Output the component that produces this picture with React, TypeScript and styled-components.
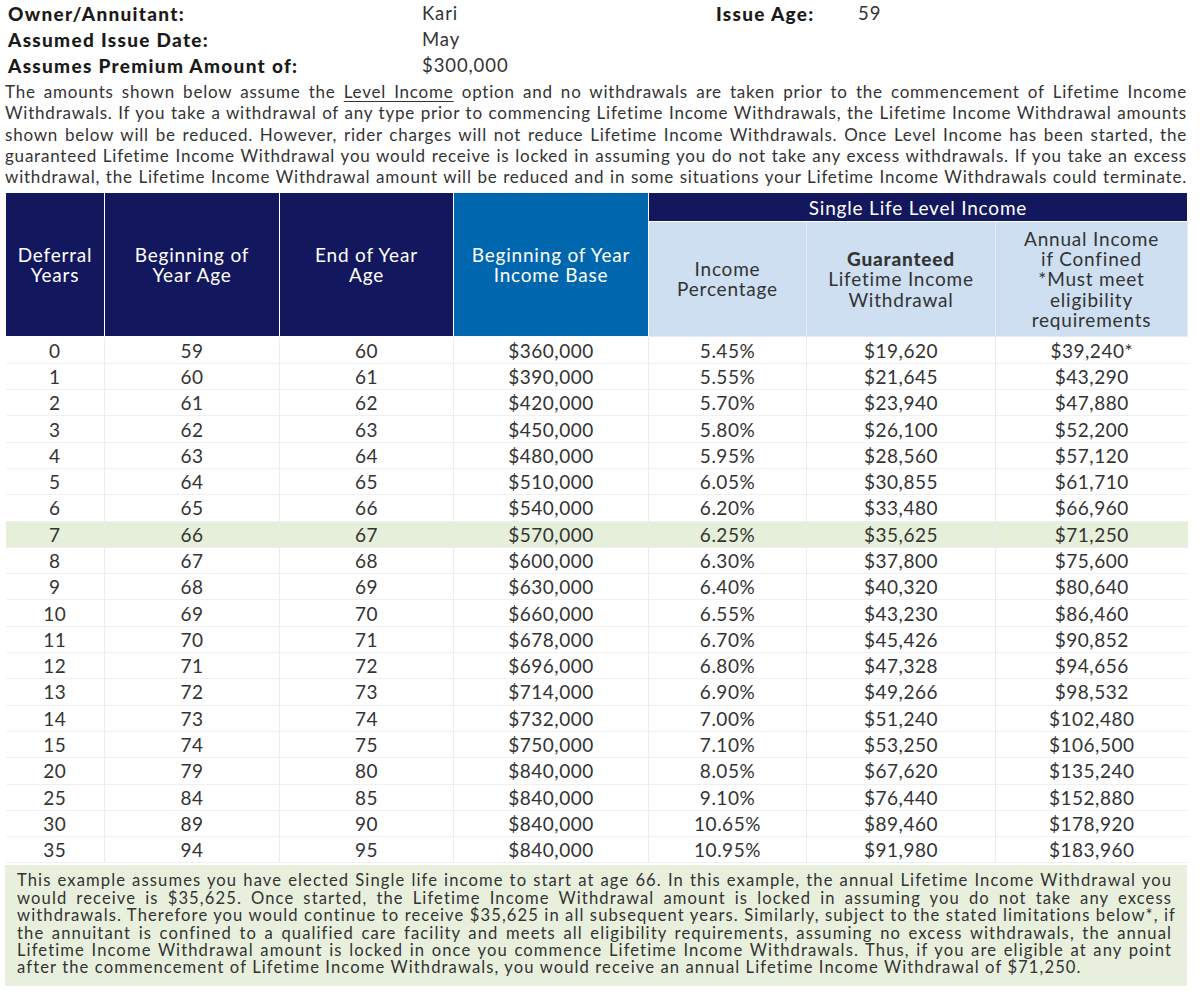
import React from "react";
import styled, { createGlobalStyle } from "styled-components";

const GlobalStyle = createGlobalStyle`
  html, body { margin: 0; padding: 0; background: #ffffff; }
  body { font-family: Lato, "Open Sans", "Liberation Sans", sans-serif; color: #333333; }
`;

const Page = styled.div`
  width: 1200px;
  padding: 0 13px 0 5px;
  box-sizing: border-box;
`;

const InfoGrid = styled.div`
  display: grid;
  grid-template-columns: 414px 294px 142px auto;
  grid-auto-rows: 26px;
  padding-left: 3px;
  align-items: center;
`;

const Label = styled.div`
  font-weight: 900;
  font-size: 19px;
  letter-spacing: 1.3px;
  color: #1a1a1a;
`;

const Value = styled.div`
  font-size: 18.5px;
  letter-spacing: 0.9px;
  color: #333333;
`;

const Intro = styled.div`
  margin-top: 3px;
  font-size: 17px;
  letter-spacing: 0.78px;
  line-height: 21.3px;
  color: #333333;
`;

const JustLine = styled.span<{ $last?: boolean }>`
  display: block;
  text-align: justify;
  text-align-last: ${(p) => (p.$last ? "left" : "justify")};
  white-space: nowrap;
`;

const Underlined = styled.span`
  text-decoration: underline;
  text-underline-offset: 3px;
`;

const Table = styled.table`
  margin-top: 5px;
  width: 1182px;
  border-collapse: collapse;
  table-layout: fixed;
`;

const HeadCell = styled.th<{ $tone: "navy" | "blue" | "light" }>`
  background: ${(p) =>
    p.$tone === "navy" ? "#13185e" : p.$tone === "blue" ? "#0066ad" : "#cddff0"};
  color: ${(p) => (p.$tone === "light" ? "#333333" : "#ffffff")};
  font-weight: 400;
  font-size: 19px;
  letter-spacing: 0.8px;
  line-height: 20.2px;
  text-align: center;
  vertical-align: middle;
  border: 1px solid ${(p) => (p.$tone === "light" ? "#e4edf7" : "#ffffff")};
  padding: 0 4px;
`;

const GroupCell = styled.th`
  background: #13185e;
  color: #ffffff;
  font-weight: 400;
  font-size: 19px;
  letter-spacing: 0.8px;
  height: 28px;
  padding: 0;
  text-align: center;
  border: 1px solid #ffffff;
`;

const Strong = styled.span`
  font-weight: 900;
`;

const Row = styled.tr<{ $hi?: boolean }>`
  background: ${(p) => (p.$hi ? "#e6efda" : "transparent")};
`;

const Cell = styled.td`
  height: 25.3px;
  padding: 0;
  font-size: 19px;
  letter-spacing: 0.5px;
  line-height: 25px;
  text-align: center;
  color: #333333;
  border-left: 1px solid #ececec;
  border-bottom: 1px solid #f0f0f0;
  &:first-child { border-left: none; }
`;

const Footer = styled.div`
  width: 1182px;
  box-sizing: border-box;
  background: #e8f0dd;
  margin-top: 2px;
  padding: 7px 15px 9px 12px;
  font-size: 16.6px;
  letter-spacing: 1.1px;
  line-height: 17.4px;
  color: #333333;
`;

const rows: string[][] = [
  ["0", "59", "60", "$360,000", "5.45%", "$19,620", "$39,240*"],
  ["1", "60", "61", "$390,000", "5.55%", "$21,645", "$43,290"],
  ["2", "61", "62", "$420,000", "5.70%", "$23,940", "$47,880"],
  ["3", "62", "63", "$450,000", "5.80%", "$26,100", "$52,200"],
  ["4", "63", "64", "$480,000", "5.95%", "$28,560", "$57,120"],
  ["5", "64", "65", "$510,000", "6.05%", "$30,855", "$61,710"],
  ["6", "65", "66", "$540,000", "6.20%", "$33,480", "$66,960"],
  ["7", "66", "67", "$570,000", "6.25%", "$35,625", "$71,250"],
  ["8", "67", "68", "$600,000", "6.30%", "$37,800", "$75,600"],
  ["9", "68", "69", "$630,000", "6.40%", "$40,320", "$80,640"],
  ["10", "69", "70", "$660,000", "6.55%", "$43,230", "$86,460"],
  ["11", "70", "71", "$678,000", "6.70%", "$45,426", "$90,852"],
  ["12", "71", "72", "$696,000", "6.80%", "$47,328", "$94,656"],
  ["13", "72", "73", "$714,000", "6.90%", "$49,266", "$98,532"],
  ["14", "73", "74", "$732,000", "7.00%", "$51,240", "$102,480"],
  ["15", "74", "75", "$750,000", "7.10%", "$53,250", "$106,500"],
  ["20", "79", "80", "$840,000", "8.05%", "$67,620", "$135,240"],
  ["25", "84", "85", "$840,000", "9.10%", "$76,440", "$152,880"],
  ["30", "89", "90", "$840,000", "10.65%", "$89,460", "$178,920"],
  ["35", "94", "95", "$840,000", "10.95%", "$91,980", "$183,960"],
];

const footerLines = [
  "This example assumes you have elected Single life income to start at age 66. In this example, the annual Lifetime Income Withdrawal you",
  "would receive is $35,625. Once started, the Lifetime Income Withdrawal amount is locked in assuming you do not take any excess",
  "withdrawals. Therefore you would continue to receive $35,625 in all subsequent years. Similarly, subject to the stated limitations below*, if",
  "the annuitant is confined to a qualified care facility and meets all eligibility requirements, assuming no excess withdrawals, the annual",
  "Lifetime Income Withdrawal amount is locked in once you commence Lifetime Income Withdrawals. Thus, if you are eligible at any point",
  "after the commencement of Lifetime Income Withdrawals, you would receive an annual Lifetime Income Withdrawal of $71,250.",
];

const widths = [99, 175, 174, 195, 158, 189, 192];

export default function App() {
  return (
    <Page>
      <GlobalStyle />
      <InfoGrid>
        <Label>Owner/Annuitant:</Label>
        <Value>Kari</Value>
        <Label>Issue Age:</Label>
        <Value>59</Value>
        <Label>Assumed Issue Date:</Label>
        <Value>May</Value>
        <div />
        <div />
        <Label>Assumes Premium Amount of:</Label>
        <Value>$300,000</Value>
      </InfoGrid>
      <Intro>
        <JustLine>
          The amounts shown below assume the <Underlined>Level Income</Underlined> option and no withdrawals are taken prior to the commencement of Lifetime Income
        </JustLine>
        <JustLine>
          Withdrawals. If you take a withdrawal of any type prior to commencing Lifetime Income Withdrawals, the Lifetime Income Withdrawal amounts
        </JustLine>
        <JustLine>
          shown below will be reduced. However, rider charges will not reduce Lifetime Income Withdrawals. Once Level Income has been started, the
        </JustLine>
        <JustLine>
          guaranteed Lifetime Income Withdrawal you would receive is locked in assuming you do not take any excess withdrawals. If you take an excess
        </JustLine>
        <JustLine>
          withdrawal, the Lifetime Income Withdrawal amount will be reduced and in some situations your Lifetime Income Withdrawals could terminate.
        </JustLine>
      </Intro>
      <Table>
        <colgroup>
          {widths.map((w, i) => (
            <col key={i} style={{ width: w }} />
          ))}
        </colgroup>
        <thead>
          <tr>
            <HeadCell $tone="navy" rowSpan={2}>Deferral<br />Years</HeadCell>
            <HeadCell $tone="navy" rowSpan={2}>Beginning of<br />Year Age</HeadCell>
            <HeadCell $tone="navy" rowSpan={2}>End of Year<br />Age</HeadCell>
            <HeadCell $tone="blue" rowSpan={2}>Beginning of Year<br />Income Base</HeadCell>
            <GroupCell colSpan={3}>Single Life Level Income</GroupCell>
          </tr>
          <tr style={{ height: 115 }}>
            <HeadCell $tone="light">Income<br />Percentage</HeadCell>
            <HeadCell $tone="light">
              <Strong>Guaranteed</Strong>
              <br />Lifetime Income<br />Withdrawal
            </HeadCell>
            <HeadCell $tone="light">
              Annual Income<br />if Confined<br />*Must meet<br />eligibility<br />requirements
            </HeadCell>
          </tr>
        </thead>
        <tbody>
          {rows.map((r) => (
            <Row key={r[0]} $hi={r[0] === "7"}>
              {r.map((c, i) => (
                <Cell key={i}>{c}</Cell>
              ))}
            </Row>
          ))}
        </tbody>
      </Table>
      <Footer>
        {footerLines.map((l, i) => (
          <JustLine key={i} $last={i === footerLines.length - 1}>
            {l}
          </JustLine>
        ))}
      </Footer>
    </Page>
  );
}
